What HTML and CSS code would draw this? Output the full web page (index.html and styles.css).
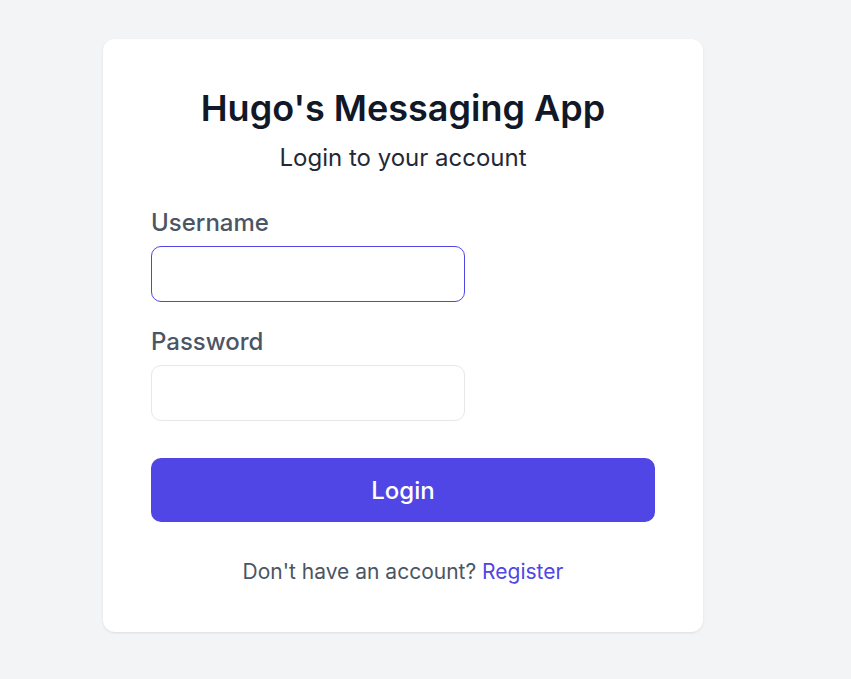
FILE: index.html
```html
<!DOCTYPE html>
<html lang="en">
<head>
<meta charset="utf-8">
<title>Login</title>
<link rel="stylesheet" href="styles.css">
</head>
<body>
<main class="card">
  <h1 class="title">Hugo's Messaging App</h1>
  <p class="subtitle">Login to your account</p>
  <form class="form">
    <label class="label" for="username">Username</label>
    <input class="input input-focus" id="username" type="text">
    <label class="label label-gap" for="password">Password</label>
    <input class="input" id="password" type="password">
    <button class="btn" type="button">Login</button>
  </form>
  <p class="footer">Don't have an account? <a class="link" href="#">Register</a></p>
</main>
</body>
</html>
```
FILE: styles.css
```css
* { box-sizing: border-box; }
html, body { margin: 0; }
body {
  background: #f3f4f6;
  font-family: Inter, "Noto Sans", sans-serif;
  padding: 39px 0 0 103px;
  min-height: 679px;
}
.card {
  width: 600px;
  height: 593px;
  background: #fff;
  border-radius: 12px;
  box-shadow: 0 1px 3px rgba(0,0,0,0.06), 0 1px 2px rgba(0,0,0,0.04);
  padding: 47px 48px 0;
}
.title {
  margin: 0;
  font-size: 36px;
  line-height: 44px;
  font-weight: 600;
  color: #111827;
  text-align: center;
}
.subtitle {
  margin: 12px 0 0;
  font-size: 24px;
  line-height: 32px;
  color: #1f2937;
  text-align: center;
}
.form {
  display: flex;
  flex-direction: column;
  margin-top: 33px;
}
.label {
  font-size: 24px;
  line-height: 32px;
  color: #4b5563;
  font-weight: 500;
}
.label-gap { margin-top: 24px; }
.input {
  width: 314px;
  height: 56px;
  margin-top: 7px;
  border: 1px solid #e5e7eb;
  border-radius: 10px;
  background: #fff;
  outline: none;
  font: inherit;
}
.input-focus { border-color: #4f46e5; }
.btn {
  margin-top: 37px;
  height: 64px;
  width: 100%;
  border: none;
  border-radius: 10px;
  background: #4f46e5;
  color: #fff;
  font-family: inherit;
  font-size: 24px;
  font-weight: 500;
}
.footer {
  margin: 36px 0 0;
  font-size: 21px;
  line-height: 28px;
  color: #4b5563;
  text-align: center;
}
.link { color: #4f46e5; text-decoration: none; }
```
